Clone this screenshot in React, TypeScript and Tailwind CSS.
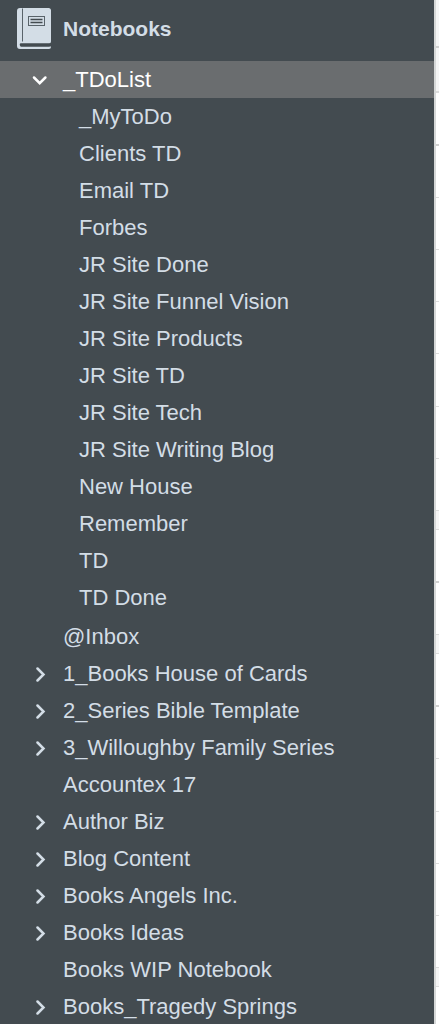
import clsx from 'clsx';

interface Notebook {
  name: string;
  stack?: boolean;
  children?: string[];
}

const notebooks: Notebook[] = [
  {
    name: '_TDoList',
    stack: true,
    children: [
      '_MyToDo',
      'Clients TD',
      'Email TD',
      'Forbes',
      'JR Site Done',
      'JR Site Funnel Vision',
      'JR Site Products',
      'JR Site TD',
      'JR Site Tech',
      'JR Site Writing Blog',
      'New House',
      'Remember',
      'TD',
      'TD Done',
    ],
  },
  { name: '@Inbox' },
  { name: '1_Books House of Cards', stack: true },
  { name: '2_Series Bible Template', stack: true },
  { name: '3_Willoughby Family Series', stack: true },
  { name: 'Accountex 17' },
  { name: 'Author Biz', stack: true },
  { name: 'Blog Content', stack: true },
  { name: 'Books Angels Inc.', stack: true },
  { name: 'Books Ideas', stack: true },
  { name: 'Books WIP Notebook' },
  { name: 'Books_Tragedy Springs', stack: true },
];

const row = 'h-[52px] border-b border-[#dcdcdc] bg-white';
const tallRow = 'h-[53px] border-b border-[#dcdcdc] bg-white';
const darkRow = 'h-[53px] border-b-2 border-[#d0d0d0] bg-white';
const heading = 'h-[19px] border-b border-[#dcdcdc] bg-[#f5f5f5]';

// the edge of the note list that shows beside the sidebar
const noteRows = [
  'h-12 border-b-2 border-[#d0d0d0] bg-[#f5f5f5]',
  'h-[45px] border-b-2 border-[#dcdcdc] bg-[#f5f5f5]',
  darkRow, row, row, row, row, tallRow, row, row,
  heading, darkRow, row, heading, darkRow,
  row, tallRow, row, row, row, heading,
];

function NotebookIcon() {
  return (
    <svg className="h-[42px] w-[34px] shrink-0" viewBox="0 0 34 42" fill="none" aria-hidden="true">
      <path d="M3 0h28.5A2.5 2.5 0 0 1 34 2.500V33.500A2 2 0 0 1 32 35.500H3.500V38.500H34V39A2 2 0 0 1 32 41H3A3 3 0 0 1 0 38V3A3 3 0 0 1 3 0Z" fill="#d3dde6" />
      <path d="M3 35.500H33.500L32.500 38.500H4.500A2 2 0 0 1 3 35.500Z" fill="#434b50" />
      <path d="M5.500 0.500V33.500" stroke="#59636a" />
      <rect x="11.500" y="8.500" width="16" height="9" stroke="#59636a" />
      <path d="M13.500 11.500h12M13.500 14.500h12" stroke="#434b50" strokeWidth="1.500" />
    </svg>
  );
}

function Arrow({ open }: { open: boolean }) {
  return (
    <svg className="h-4 w-4" viewBox="0 0 16 16" fill="none" stroke="currentColor" strokeWidth="2.500" strokeLinecap="round" aria-hidden="true">
      <path d={open ? 'M2 5.500l5.700 5.700L13.400 5.500' : 'M5.500 2.500l6 6-6 6'} />
    </svg>
  );
}

function NotebookRow({ name, stack, children }: Notebook) {
  const open = Boolean(children);

  return (
    <li>
      <button
        type="button"
        aria-expanded={stack ? open : undefined}
        className={clsx('flex h-[37px] w-full items-center pl-8 text-left whitespace-nowrap', open && 'bg-[#6a6d6f] text-white')}
      >
        <span className="w-[31px] shrink-0">
          {stack && <Arrow open={open} />}
        </span>
        {name}
      </button>
      {children && (
        <ul className="pb-0.5">
          {children.map((child) => (
            <li key={child}>
              <button type="button" className="flex h-[37px] w-full items-center pl-[79px] text-left whitespace-nowrap">
                {child}
              </button>
            </li>
          ))}
        </ul>
      )}
    </li>
  );
}

export default function App() {
  return (
    <div className="flex h-screen overflow-hidden bg-white font-['Liberation_Sans',Arial,sans-serif]">
      <nav aria-label="Notebooks" className="min-w-0 flex-1 overflow-hidden bg-[#434b50] text-[22px] leading-7 text-[#d3dde6]">
        <h1 className="flex h-[61px] items-center gap-3 pb-1 pl-[17px] text-[21px] font-bold">
          <NotebookIcon />
          Notebooks
        </h1>
        <ul>
          {notebooks.map((notebook) => (
            <NotebookRow key={notebook.name} {...notebook} />
          ))}
        </ul>
      </nav>
      <div className="w-[5px] shrink-0 border-l-2 border-[#d6d8d8]">
        {noteRows.map((style, index) => (
          <div key={index} className={style} />
        ))}
      </div>
    </div>
  );
}
